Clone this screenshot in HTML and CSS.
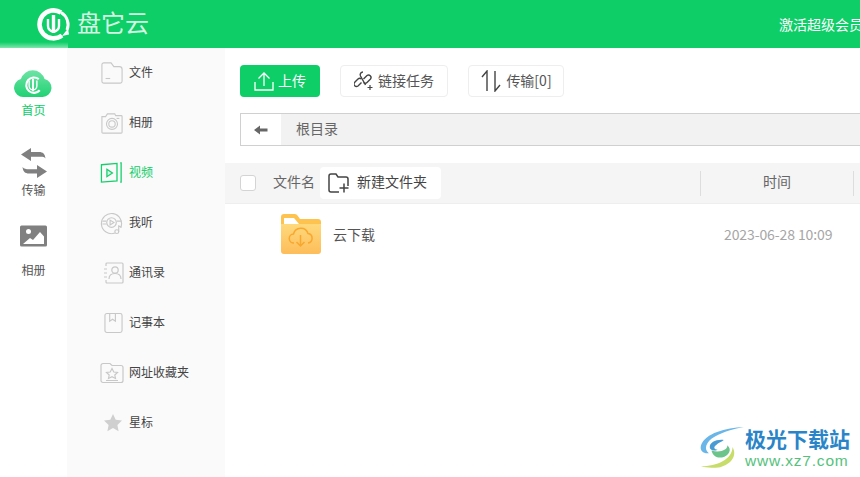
FILE: index.html
```html
<!DOCTYPE html>
<html lang="en">
<head>
    <meta charset="UTF-8">
    <meta name="viewport" content="width=device-width, initial-scale=1.0">
    <title>盘它云</title>
    <link rel="stylesheet" href="styles.css">
</head>
<body>
    <header class="topbar">
        <div class="brand">
            <svg class="brand-icon" width="34" height="34" viewBox="0 0 34 34" fill="none" stroke="#fff">
                <path d="M24 5.500A14 14 0 1 0 25 28.500" stroke-width="4.600"/>
                <path d="M24 5.500A14 14 0 0 1 30 23" stroke-width="3"/>
                <path d="M11 12v7a5.500 5.500 0 0 0 11 0v-7" stroke-width="2.400"/>
                <path d="M16.500 8v18" stroke-width="3.400"/>
                <path d="M25 29l7-1.500-1-6z" fill="#fff" stroke="none"/>
            </svg>
            <span class="brand-name">盘它云</span>
        </div>
        <a class="vip-link">激活超级会员</a>
    </header>
    <div class="layout">
        <nav class="rail">
            <div class="rail-item active">
                <div class="rail-icon">
                    <svg class="icon-home" width="40" height="27" viewBox="0 0 40 28">
                        <defs>
                            <linearGradient id="cloudFill" x1="0" y1="0" x2="0" y2="1">
                                <stop offset="0" stop-color="#6fe3a5"/>
                                <stop offset="1" stop-color="#1fd273"/>
                            </linearGradient>
                        </defs>
                        <path d="M10 28a9.500 9.500 0 0 1-2.500-18.700A12.800 12.800 0 0 1 32 9.300 9.500 9.500 0 0 1 30 28z" fill="url(#cloudFill)"/>
                        <path d="M26 9.500a8 8 0 1 0 1 11.500" fill="none" stroke="#fff" stroke-width="2.200"/>
                        <path d="M16 11v5.500a4 4 0 0 0 8 0V11" fill="none" stroke="#fff" stroke-width="1.500"/>
                        <path d="M20 9v13" stroke="#fff" stroke-width="2"/>
                    </svg>
                </div>
                <span>首页</span>
            </div>
            <div class="rail-item">
                <div class="rail-icon">
                    <svg class="icon-transfer" width="26" height="30" viewBox="0 0 26 30" fill="#808080">
                        <path d="M0 6.500 10 0v4h8c4 0 6 2 6.500 6.500C23 8.500 21 8.800 18 8.800h-8V13z"/>
                        <path d="M26 23.500 16 30v-4.500H8c-4 0-6-2-6.500-6.500C3 21 5 21.200 8 21.200h8V17z"/>
                    </svg>
                </div>
                <span>传输</span>
            </div>
            <div class="rail-item">
                <div class="rail-icon">
                    <svg width="27" height="22" viewBox="0 0 27 22">
                        <rect width="27" height="21" y="0.500" rx="1.500" fill="#808080"/>
                        <circle cx="8.500" cy="6.500" r="2.500" fill="#fff"/>
                        <path d="M3 19l7-6 3 2 7-8 4 4.500V19z" fill="#fff"/>
                    </svg>
                </div>
                <span>相册</span>
            </div>
        </nav>
        <aside class="sidebar">
            <div class="side-item">
                <svg class="side-icon" width="24" height="22" viewBox="0 0 24 24" fill="none" stroke="#c8c8c8" stroke-width="1.200">
                    <path d="M3 1h8l3 4h6a3 3 0 0 1 3 3v13a2 2 0 0 1-2 2H3a2 2 0 0 1-2-2V3a2 2 0 0 1 2-2z"/>
                    <path d="M5 18h5"/>
                </svg>
                <span>文件</span>
            </div>
            <div class="side-item">
                <svg class="side-icon" width="24" height="22" viewBox="0 0 24 24" fill="none" stroke="#c8c8c8" stroke-width="1.200">
                    <path d="M1 5h4l2-3h8l1 2h6a1 1 0 0 1 1 1v17a1 1 0 0 1-1 1H2a1 1 0 0 1-1-1z"/>
                    <circle cx="12" cy="13" r="6"/>
                    <circle cx="12" cy="13" r="3.500"/>
                    <path d="M17 7h3"/>
                </svg>
                <span>相册</span>
            </div>
            <div class="side-item active">
                <svg class="side-icon" width="23" height="22" viewBox="0 0 24 24" fill="none" stroke="#14cf6c" stroke-width="1.400">
                    <path d="M1 3l17-1.500v19L1 22z"/>
                    <path d="M7 8l6 4-6 4z" fill="#d3f5e2"/>
                    <path d="M21.500 1h1v21h-1"/>
                </svg>
                <span>视频</span>
            </div>
            <div class="side-item">
                <svg class="side-icon" width="24" height="23" viewBox="0 0 24 24" fill="none" stroke="#c8c8c8" stroke-width="1.200">
                    <path d="M21 17a10.500 10.500 0 1 0-6 5.500"/>
                    <circle cx="11.500" cy="11.500" r="5"/>
                    <path d="M10 9l4 2.500-4 2.500z"/>
                    <path d="M2 10h4M17 10h5M2 13h4"/>
                    <circle cx="17" cy="21" r="2"/>
                    <path d="M19 21v-6l3 1.500"/>
                </svg>
                <span>我听</span>
            </div>
            <div class="side-item">
                <svg class="side-icon icon-narrow" width="20" height="22" viewBox="0 0 20 22" fill="none" stroke="#c8c8c8" stroke-width="1.200">
                    <path d="M2 4V2a1 1 0 0 1 1-1h15a1 1 0 0 1 1 1v18a1 1 0 0 1-1 1H3a1 1 0 0 1-1-1v-2"/>
                    <circle cx="11" cy="8" r="3.200"/>
                    <path d="M5 17c0-3.500 2.500-5.500 6-5.500s6 2 6 5.500"/>
                    <path d="M0 7h3M0 11h3M0 15h3"/>
                </svg>
                <span>通讯录</span>
            </div>
            <div class="side-item">
                <svg class="side-icon icon-narrow" width="19" height="22" viewBox="0 0 20 22" fill="none" stroke="#c8c8c8" stroke-width="1.200">
                    <rect x="1" y="1" width="18" height="20" rx="2"/>
                    <path d="M6 1v8l3-2 3 2V1"/>
                </svg>
                <span>记事本</span>
            </div>
            <div class="side-item">
                <svg class="side-icon" width="24" height="21" viewBox="0 0 24 21" fill="none" stroke="#c8c8c8" stroke-width="1.200">
                    <path d="M1 3a2 2 0 0 1 2-2h7l2 2h9a2 2 0 0 1 2 2v13a2 2 0 0 1-2 2H3a2 2 0 0 1-2-2z"/>
                    <path d="M12 6l1.800 3.500 3.700.5-2.700 2.500.7 3.500-3.500-1.800-3.500 1.800.7-3.500L6.500 10l3.700-.5z"/>
                    <path d="M6 18h12"/>
                </svg>
                <span>网址收藏夹</span>
            </div>
            <div class="side-item">
                <svg class="side-icon icon-narrow" width="18" height="18" viewBox="0 0 18 18" fill="#cfcfcf">
                    <path d="M9 0l2.700 5.800 6.300.8-4.600 4.300 1.200 6.300L9 14.100l-5.600 3.100 1.200-6.300L0 6.600l6.300-.8z"/>
                </svg>
                <span>星标</span>
            </div>
        </aside>
        <main class="main">
            <div class="toolbar">
                <button class="btn btn-upload">
                    <svg width="20" height="20" viewBox="0 0 20 20" fill="none" stroke="#fff" stroke-width="1.300">
                        <path d="M1 11v8h18v-8"/>
                        <path d="M10 15V2M4.500 7.500 10 2l5.500 5.500"/>
                    </svg>
                    <span>上传</span>
                </button>
                <button class="btn btn-link">
                    <svg width="20" height="20" viewBox="0 0 20 20" fill="none" stroke="#444" stroke-width="1.400">
                        <path d="M7.500 11.500 4 15a2.500 2.500 0 0 1-3.500-3.500L4 8a2.500 2.500 0 0 1 3.500 0"/>
                        <path d="M9.500 8 13 4.500A2.500 2.500 0 0 1 16.500 8L13 11.500a2.500 2.500 0 0 1-3.500 0"/>
                        <path d="M9 1c-2 0-3.500 2-2.500 4l5 9"/>
                        <path d="M16 14v5M13.500 16.500h5" stroke-width="1.200"/>
                    </svg>
                    <span>链接任务</span>
                </button>
                <button class="btn btn-transfer">
                    <svg width="22" height="22" viewBox="0 0 22 22" fill="none" stroke="#444" stroke-width="1.400">
                        <path d="M2 7l5-6v20"/>
                        <path d="M15 1v20l5-6"/>
                    </svg>
                    <span>传输[0]</span>
                </button>
            </div>
            <div class="crumbs">
                <div class="crumb-back">
                    <svg width="14" height="10" viewBox="0 0 14 10" fill="#666">
                        <path d="M0 5l6-4.500V3.500h7.500v3H6v3z"/>
                    </svg>
                </div>
                <span class="crumb-path">根目录</span>
            </div>
            <div class="list-head">
                <span class="checkbox"></span>
                <span class="col-name">文件名</span>
                <button class="btn-newfolder">
                    <svg width="22" height="22" viewBox="0 0 22 22" fill="none" stroke="#444" stroke-width="1.500">
                        <path d="M11 20H3a2 2 0 0 1-2-2V4a2 2 0 0 1 2-2h5l2 3h8a2 2 0 0 1 2 2v7"/>
                        <path d="M16 11.500v9M11.500 16h9"/>
                    </svg>
                    <span>新建文件夹</span>
                </button>
                <span class="col-time"><span>时间</span></span>
            </div>
            <div class="file-row">
                <svg class="file-icon" width="40" height="40" viewBox="0 0 40 40">
                    <defs>
                        <linearGradient id="folderFill" x1="0" y1="0" x2="0" y2="1">
                            <stop offset="0" stop-color="#fed97c"/>
                            <stop offset="1" stop-color="#fdbd5a"/>
                        </linearGradient>
                    </defs>
                    <path d="M3 0h11a3 3 0 0 1 2.500 1.500L19 5h18a3 3 0 0 1 3 3v10H0V3a3 3 0 0 1 3-3z" fill="#fdc34e"/>
                    <path d="M3 4h10l5 6H3z" fill="#fff"/>
                    <path d="M0 10h40v27a3 3 0 0 1-3 3H3a3 3 0 0 1-3-3z" fill="url(#folderFill)"/>
                    <path d="M13 29a4.500 4.500 0 0 1-.5-9 7.500 7.500 0 0 1 14.500-.5 4.800 4.800 0 0 1 0 9.500" fill="none" stroke="#f9a72e" stroke-width="1.500"/>
                    <path d="M19.500 21v11M15.500 28l4 4 4-4" fill="none" stroke="#f9a72e" stroke-width="1.500"/>
                </svg>
                <span class="file-name">云下载</span>
                <span class="file-time">2023-06-28 10:09</span>
            </div>
        </main>
    </div>
    <div class="watermark">
        <svg width="46" height="42" viewBox="0 0 52 48" fill="none">
            <path d="M51 1C30 2 7 8 2 22c-2 7 4 10 9 9C5 27 7 18 18 12 28 6 40 3 51 1z" fill="#6ab6e8"/>
            <path d="M28 16c-9-1-16 3-16 8 0 4 5 5 9 3-4 0-5-3-2-5 3-3 7-4 9-6z" fill="#4a9bd4"/>
            <path d="M14 28c10 3 19-1 18-6 6 5 2 12-6 14-8 1-11-4-12-8z" fill="#6cc48a"/>
            <path d="M2 46c18 0 36-8 36-22 6 10-2 20-14 23-8 1-16 1-22-1z" fill="#c8dc6a"/>
        </svg>
        <div class="watermark-text">
            <div class="watermark-name">极光下载站</div>
            <div class="watermark-url">www.xz7.com</div>
        </div>
    </div>
</body>
</html>
```

FILE: styles.css
```css
* {
    box-sizing: border-box;
}

html, body {
    height: 100%;
}

body {
    margin: 0;
    overflow: hidden;
    position: relative;
    font-family: "Noto Sans CJK SC", "Noto Sans", sans-serif;
    font-size: 14px;
    color: #555;
    background: #fff;
}

.topbar {
    height: 48px;
    display: flex;
    justify-content: space-between;
    align-items: center;
    background: #0dce67;
    color: #fff;
}

.topbar::before {
    content: "";
    position: absolute;
    left: 0;
    top: 42px;
    width: 68px;
    height: 6px;
    background: linear-gradient(#0dce67, #7de6ad);
}

.brand {
    display: flex;
    align-items: center;
    gap: 6px;
    padding-left: 37px;
    position: relative;
}

.brand-name {
    font-size: 24px;
    line-height: 30px;
    padding-bottom: 4px;
    color: #d4f6e3;
}

.vip-link {
    width: 81px;
    white-space: nowrap;
}

.layout {
    display: flex;
    height: 429px;
}

.rail {
    width: 67px;
    flex-shrink: 0;
    padding-top: 17px;
}

.rail-item {
    height: 80px;
    display: flex;
    flex-direction: column;
    align-items: center;
    font-size: 12px;
    line-height: 16px;
    color: #555;
}

.rail-icon {
    height: 37px;
    display: flex;
    align-items: flex-start;
}

.icon-home {
    margin-top: 5px;
    margin-left: -2px;
}

.icon-transfer {
    margin-top: 3px;
}

.rail-item.active {
    color: #0dce67;
}

.sidebar {
    width: 158px;
    flex-shrink: 0;
    background: #fafafa;
}

.side-item {
    height: 50px;
    display: flex;
    align-items: center;
    font-size: 12px;
    position: relative;
    padding-left: 62px;
    color: #444;
}

.side-item span {
    padding-bottom: 4px;
}

.side-icon {
    position: absolute;
    left: 33px;
    top: 50%;
    transform: translateY(-50%);
}

.icon-narrow {
    left: 37px;
}

.side-item.active {
    color: #0dce67;
}

.main {
    flex: 1;
    min-width: 0;
}

.toolbar {
    display: flex;
    gap: 20px;
    padding: 17px 0 0 15px;
}

.btn {
    height: 32px;
    display: flex;
    align-items: center;
    justify-content: center;
    padding: 0;
    font: inherit;
    color: #555;
    background: #fff;
    border: 1px solid #eee;
    border-radius: 4px;
    cursor: pointer;
}

.btn span {
    padding-bottom: 2px;
}

.crumb-path,
.col-name,
.btn-newfolder span,
.col-time span {
    padding-bottom: 4px;
}

.btn-upload {
    width: 80px;
    gap: 4px;
    color: #fff;
    background: #0dce67;
    border: none;
}

.btn-link {
    width: 108px;
    gap: 4px;
}

.btn-transfer {
    width: 96px;
    gap: 4px;
}

.crumbs {
    height: 33px;
    margin: 16px -20px 0 15px;
    display: flex;
    align-items: center;
    background: #f2f2f2;
    border: 1px solid #d0d0d0;
    border-right: none;
}

.crumb-back {
    width: 40px;
    height: 100%;
    display: flex;
    align-items: center;
    justify-content: center;
    background: #fff;
}

.crumb-path {
    padding-left: 15px;
    color: #666;
}

.list-head {
    height: 41px;
    margin-top: 17px;
    display: flex;
    align-items: center;
    padding-left: 15px;
    background: #f5f5f5;
    border-bottom: 1px solid #eee;
    color: #666;
}

.checkbox {
    width: 16px;
    height: 16px;
    background: #fff;
    border: 1px solid #d4d4d4;
    border-radius: 3px;
}

.col-name {
    margin-left: 17px;
}

.btn-newfolder {
    width: 121px;
    height: 32px;
    margin-left: 5px;
    display: flex;
    align-items: center;
    gap: 7px;
    padding: 0 0 0 8px;
    font: inherit;
    color: #444;
    background: #fff;
    border: none;
    border-radius: 4px;
}

.col-time {
    width: 154px;
    height: 25px;
    margin-left: 259px;
    display: flex;
    align-items: center;
    justify-content: center;
    border-left: 1px solid #ddd;
    border-right: 1px solid #ddd;
}

.file-row {
    height: 60px;
    display: flex;
    align-items: center;
    padding-left: 56px;
}

.file-name {
    margin-left: 12px;
}

.file-time {
    margin-left: 349px;
    letter-spacing: -0.1px;
    color: #a6a6a6;
    white-space: nowrap;
}

.watermark {
    position: absolute;
    left: 699px;
    top: 426px;
    display: flex;
}

.watermark-name {
    height: 26px;
    font-size: 21px;
    line-height: 25px;
    font-weight: 700;
    color: #2a85c8;
}

.watermark-url {
    font-family: "Liberation Sans", sans-serif;
    font-size: 15.500px;
    line-height: 18px;
    letter-spacing: 0.8px;
    color: #55c27c;
}
```
